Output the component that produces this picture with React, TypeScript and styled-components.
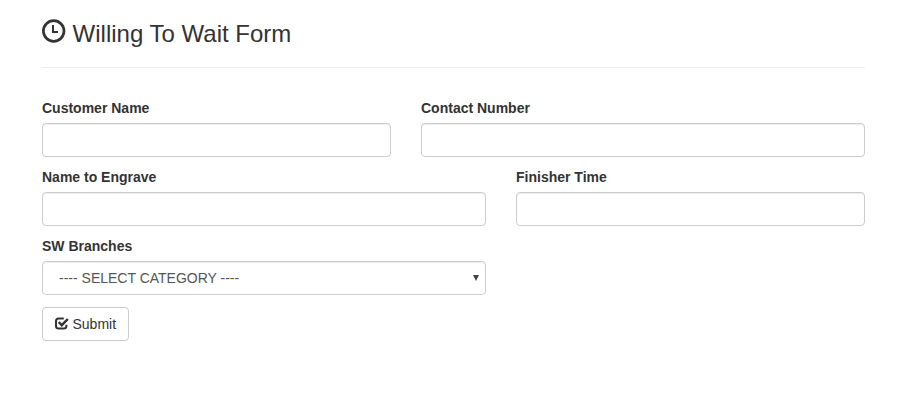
import React from "react";
import styled, { createGlobalStyle } from "styled-components";

const Global = createGlobalStyle`
  * { box-sizing: border-box; }
  body { margin: 0; background: #fff; color: #333; font: 14px/20px "Liberation Sans", Arial, sans-serif; }
`;
const Page = styled.main`padding: 19px 50px 0 42px;`;
const Header = styled.header`
  display: flex; gap: 6.600px; height: 49px; margin-bottom: 30px;
  border-bottom: 1px solid #eee;
`;
const Title = styled.h1`margin: 2px 0 0; font-size: 24px; line-height: 26px; font-weight: 400;`;
const ClockIcon = styled.svg`width: 24px; height: 24px; flex: none;`;
const Row = styled.div<{ $columns: string }>`
  display: grid; grid-template-columns: ${p => p.$columns}; column-gap: 30px; height: 69px;
`;
const Field = styled.div`display: flex; flex-direction: column;`;
const Label = styled.label`font-weight: 700; line-height: 20px; margin-bottom: 5px;`;
const Input = styled.input`
  width: 100%; height: 34px; padding: 6px 12px; border: 1px solid #ccc; border-radius: 4px;
  background: #fff; box-shadow: inset 0 1px 1px rgba(0,0,0,.075);
`;
const Select = styled.button`
  display: flex; align-items: center; justify-content: space-between; width: 100%; height: 34px;
  padding: 0 6px 0 16px; border: 1px solid #ccc; border-radius: 4px; background: #fff;
  box-shadow: inset 0 1px 1px rgba(0,0,0,.075); color: #555;
  font: 14px/20px "Liberation Sans", Arial, sans-serif;
`;
const Arrow = styled.svg`width: 6px; height: 6px;`;
const Submit = styled.button`
  display: flex; align-items: center; gap: 3.500px; width: 87px; height: 34px; margin-top: 2px; padding: 0 12px;
  border: 1px solid #ccc; border-radius: 4px; background: #fff; color: #333;
  font: 14px/20px "Liberation Sans", Arial, sans-serif;
`;
const CheckIcon = styled.svg`width: 14px; height: 14px; flex: none;`;

function TextField({ id, label }: { id: string; label: string }) {
  return <Field><Label htmlFor={id}>{label}</Label><Input id={id} /></Field>;
}

export default function App() {
  return <><Global /><Page>
    <Header>
      <ClockIcon viewBox="0 0 24 24" fill="none" stroke="#333">
        <circle cx="11.7" cy="12" r="10.300" strokeWidth="2.700" /><path d="M11 6v7h5" strokeWidth="2" />
      </ClockIcon>
      <Title>Willing To Wait Form</Title>
    </Header>
    <Row $columns="349px 444px"><TextField id="customer" label="Customer Name" /><TextField id="contact" label="Contact Number" /></Row>
    <Row $columns="444px 349px"><TextField id="engrave" label="Name to Engrave" /><TextField id="finisher" label="Finisher Time" /></Row>
    <Row $columns="444px"><Field><Label htmlFor="branch">SW Branches</Label>
      <Select id="branch" type="button">---- SELECT CATEGORY ----<Arrow viewBox="0 0 6 6"><path d="M0 0h6L3 6z" fill="#444" /></Arrow></Select>
    </Field></Row>
    <Submit type="button">
      <CheckIcon viewBox="0 0 14 14" fill="none" stroke="#333">
        <path d="M8.800 1.400H3.600Q1 1.400 1 4v5q0 2.600 2.600 2.600h5.200q2.600 0 2.600-2.600V7.800" strokeWidth="2" /><path d="M3.800 5.200l3 3L12.800 2" strokeWidth="2.500" />
      </CheckIcon>Submit
    </Submit>
  </Page></>;
}
